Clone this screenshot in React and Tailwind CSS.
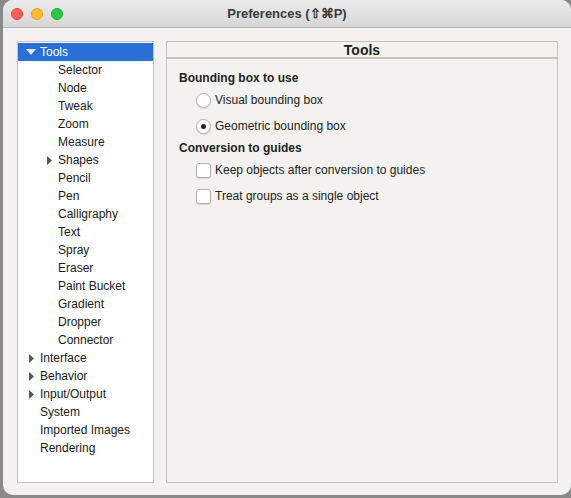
import React from 'react';

const tree = [
  { label: 'Tools', level: 0, open: true, selected: true },
  { label: 'Selector', level: 1 },
  { label: 'Node', level: 1 },
  { label: 'Tweak', level: 1 },
  { label: 'Zoom', level: 1 },
  { label: 'Measure', level: 1 },
  { label: 'Shapes', level: 1, closed: true },
  { label: 'Pencil', level: 1 },
  { label: 'Pen', level: 1 },
  { label: 'Calligraphy', level: 1 },
  { label: 'Text', level: 1 },
  { label: 'Spray', level: 1 },
  { label: 'Eraser', level: 1 },
  { label: 'Paint Bucket', level: 1 },
  { label: 'Gradient', level: 1 },
  { label: 'Dropper', level: 1 },
  { label: 'Connector', level: 1 },
  { label: 'Interface', level: 0, closed: true },
  { label: 'Behavior', level: 0, closed: true },
  { label: 'Input/Output', level: 0, closed: true },
  { label: 'System', level: 0 },
  { label: 'Imported Images', level: 0 },
  { label: 'Rendering', level: 0 },
];

// little disclosure triangles
const Arrow = ({ down, white }) =>
  down ? (
    <svg width="10" height="6" viewBox="0 0 10 6">
      <path d="M0 0 L10 0 L5 6 Z" fill={white ? '#dce8fa' : '#555'} />
    </svg>
  ) : (
    <svg width="5" height="9" viewBox="0 0 5 9">
      <path d="M0 0 L5 4.5 L0 9 Z" fill="#555" />
    </svg>
  );

const TreeRow = ({ item }) => {
  const indent = item.level === 0 ? 'pl-[4px]' : 'pl-[22px]';
  return (
    <div
      className={`flex h-[18px] items-center ${indent} ${
        item.selected ? 'bg-[#2a6fd6] text-white' : 'text-[#1a1a1a]'
      }`}
    >
      <span className="flex w-[18px] items-center justify-center">
        {item.open && <Arrow down white />}
        {item.closed && <Arrow />}
      </span>
      <span>{item.label}</span>
    </div>
  );
};

const Radio = ({ checked, label }) => (
  <div className="flex h-[26px] items-center pl-[17px]">
    <span className="flex h-[15px] w-[15px] items-center justify-center rounded-full border border-[#b4b0ac] bg-white shadow-[0_1px_1px_rgba(0,0,0,0.12)]">
      {checked && <span className="h-[5px] w-[5px] rounded-full bg-[#222]" />}
    </span>
    <span className="pl-[4px]">{label}</span>
  </div>
);

const Check = ({ label }) => (
  <div className="flex h-[26px] items-center pl-[17px]">
    <span className="h-[15px] w-[15px] rounded-[3px] border border-[#b4b0ac] bg-white shadow-[0_1px_1px_rgba(0,0,0,0.12)]" />
    <span className="pl-[4px]">{label}</span>
  </div>
);

export default function App() {
  return (
    <div
      className="h-[498px] w-[571px] overflow-hidden bg-[#8a8a8a]"
      style={{ fontFamily: '"Liberation Sans", Arial, sans-serif' }}
    >
      <div className="ml-[3px] flex h-[495px] w-[568px] flex-col overflow-hidden rounded-[10px] bg-[#f3f2f0]">
        {/* title bar */}
        <div className="relative flex h-[28px] shrink-0 items-center justify-center border-b border-[#b3b3b3] bg-gradient-to-b from-[#ececec] to-[#d6d6d6]">
          <div className="absolute left-[8px] top-[8px] flex gap-[8px]">
            <span className="h-[12px] w-[12px] rounded-full border border-[#e0443e] bg-[#fe5f57]" />
            <span className="h-[12px] w-[12px] rounded-full border border-[#dea123] bg-[#febc2e]" />
            <span className="h-[12px] w-[12px] rounded-full border border-[#1aab29] bg-[#28c840]" />
          </div>
          <span className="text-[13px] font-bold text-[#3a3a3a]">Preferences (⇧⌘P)</span>
        </div>

        {/* body */}
        <div className="flex flex-1 gap-[12px] pb-[12px] pl-[14px] pr-[13px] pt-[13px] text-[12px]">
          <div className="w-[137px] border border-[#c9c2bb] bg-white pt-[1px]">
            {tree.map((item) => (
              <TreeRow key={item.label} item={item} />
            ))}
          </div>

          <div className="flex flex-1 flex-col border border-[#c9c2bb]">
            <div className="flex h-[17px] items-center justify-center border-b-2 border-[#c9c2bb] pt-[2px] text-[14px] font-bold text-[#222]">
              Tools
            </div>
            <div className="px-[12px] pt-[10px] text-[#222]">
              <div className="h-[18px] font-bold leading-[18px]">Bounding box to use</div>
              <Radio label="Visual bounding box" />
              <Radio checked label="Geometric bounding box" />
              <div className="h-[18px] font-bold leading-[18px]">Conversion to guides</div>
              <Check label="Keep objects after conversion to guides" />
              <Check label="Treat groups as a single object" />
            </div>
          </div>
        </div>
      </div>
    </div>
  );
}
